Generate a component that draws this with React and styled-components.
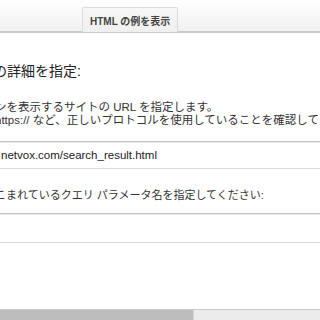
import React from "react";
import styled, { createGlobalStyle } from "styled-components";

const Global = createGlobalStyle`
  html, body { margin: 0; padding: 0; background: #fff; overflow: hidden; }
  body { width: 320px; height: 320px; }
`;

const Page = styled.div`
  width: 320px;
  height: 320px;
  display: flex;
  flex-direction: column;
  overflow: hidden;
  font-family: "Liberation Sans", "Noto Sans CJK JP", sans-serif;
  color: #333;
`;

const TopBar = styled.div`
  height: 33px;
  flex: none;
  box-sizing: border-box;
  background: linear-gradient(#ffffff, #f0f0f0);
  border-bottom: 2px solid #c9c9c9;
  display: flex;
  align-items: flex-end;
  padding-left: 82px;
`;

const Tab = styled.div`
  height: 25px;
  box-sizing: border-box;
  padding: 0 7px;
  display: flex;
  align-items: center;
  background: linear-gradient(#f7f7f7, #efefef);
  border: 1px solid #dcdcdc;
  border-bottom: none;
  border-radius: 2px 2px 0 0;
  font-size: 10px;
  font-weight: bold;
  color: #444;
  margin-bottom: -1px;
`;

const Main = styled.div`
  flex: 1;
  display: flex;
  flex-direction: column;
  margin-left: -5px;
  width: 460px;
`;

const Heading = styled.h2`
  margin: 28px 0 0 -2px;
  font-size: 14px;
  line-height: 20px;
  font-weight: normal;
  color: #222;
  white-space: nowrap;
`;

const Text = styled.p`
  margin: ${(p) => p.$mt || 0}px 0 0;
  font-size: ${(p) => p.$fs || 11.5}px;
  line-height: 13px;
  color: #333;
  white-space: nowrap;
`;

const Field = styled.div`
  margin: ${(p) => p.$mt}px 0 0 -20px;
  height: ${(p) => p.$h}px;
  box-sizing: border-box;
  width: 480px;
  padding-left: 25px;
  display: flex;
  align-items: center;
  border: 1px solid #dcdcdc;
  border-top-color: #c6c6c6;
  box-shadow: inset 0 1px 0 #ececec;
  font-size: 11.5px;
  color: #222;
  white-space: nowrap;
`;

const Scrollbar = styled.div`
  margin-top: auto;
  height: 11px;
  flex: none;
  box-sizing: border-box;
  border-top: 1px solid #cacaca;
  background: #ececec;
  display: flex;
`;

const Thumb = styled.div`
  width: 193px;
  background: #bdbdbd;
  border-right: 1px solid #d6d6d6;
`;

export default function App() {
  return (
    <Page>
      <Global />
      <TopBar>
        <Tab>HTML の例を表示</Tab>
      </TopBar>
      <Main>
        <Heading>の詳細を指定:</Heading>
        <Text $mt={20}>ンを表示するサイトの URL を指定します。</Text>
        <Text>https:// など、正しいプロトコルを使用していることを確認してください。</Text>
        <Field $mt={14} $h={28}>netvox.com/search_result.html</Field>
        <Text $mt={20} $fs={11}>こまれているクエリ パラメータ名を指定してください:</Text>
        <Field $mt={11} $h={30}></Field>
      </Main>
      <Scrollbar>
        <Thumb />
      </Scrollbar>
    </Page>
  );
}
